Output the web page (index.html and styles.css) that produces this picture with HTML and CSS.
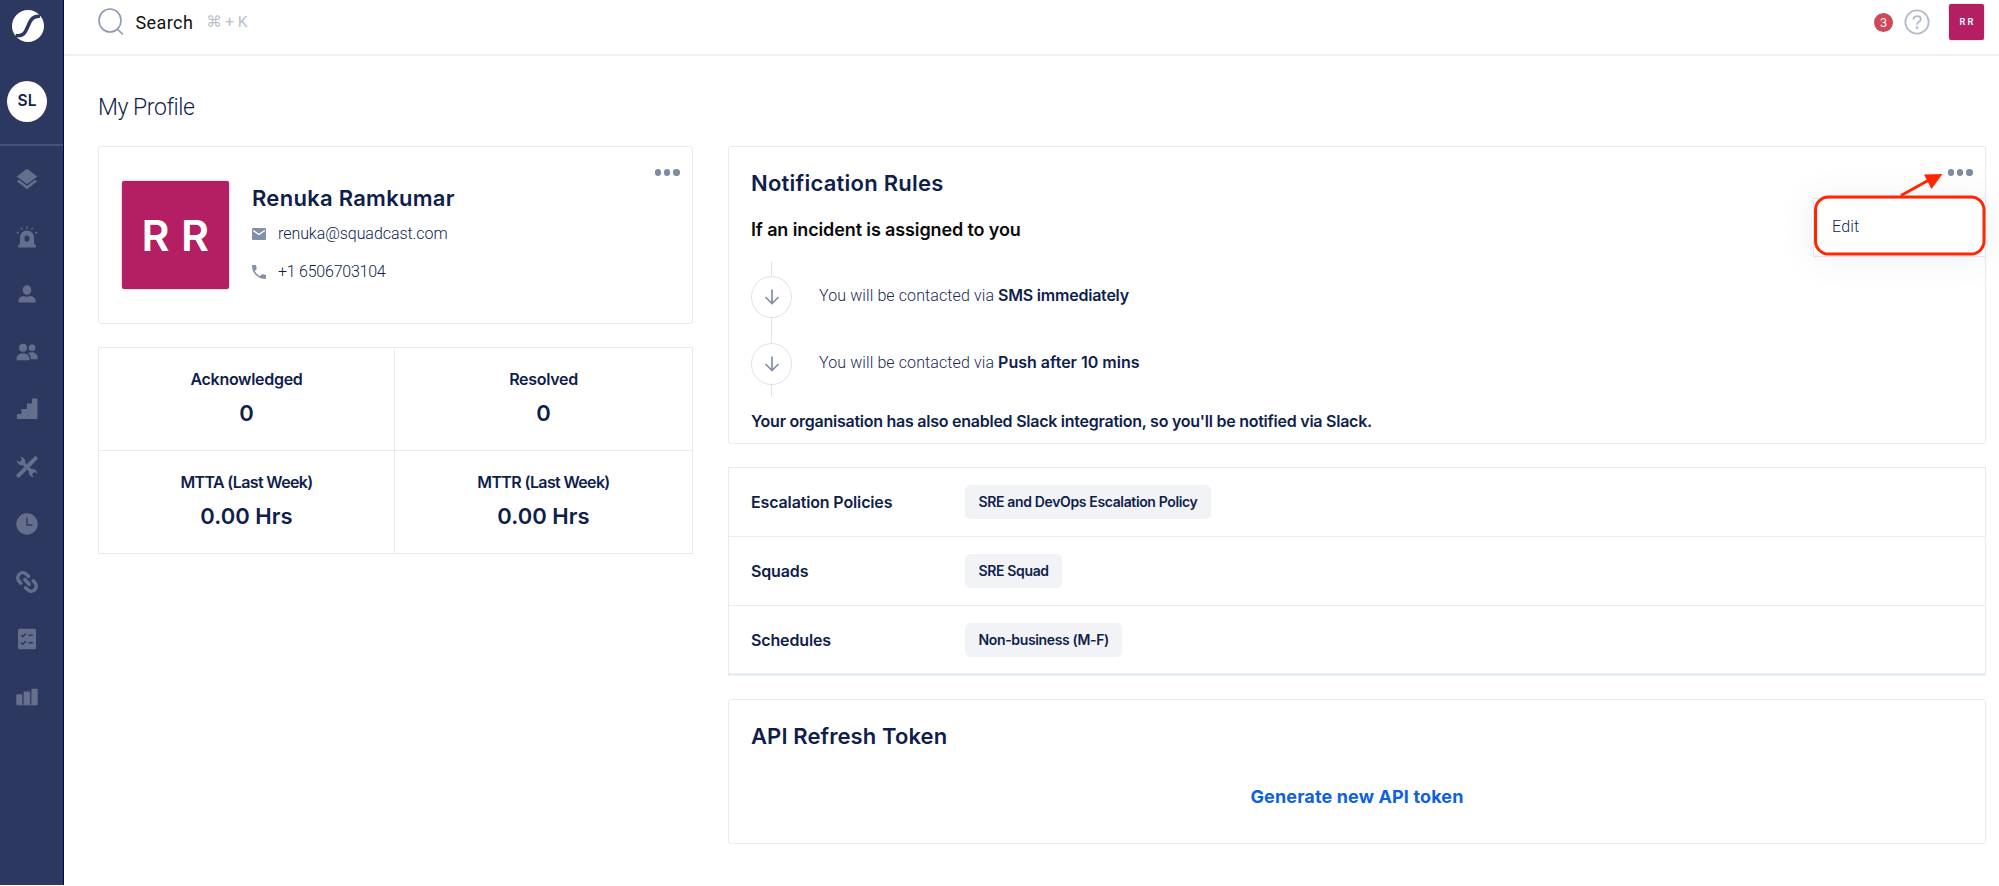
FILE: index.html
```html
<!DOCTYPE html>
<html lang="en">
<head>
<meta charset="utf-8">
<title>My Profile</title>
<link rel="stylesheet" href="styles.css">
</head>
<body>
<div class="app">
  <aside class="sidebar">
    <svg class="logo" viewBox="0 0 34 34">
      <circle cx="17" cy="17" r="16" fill="#fff"/>
      <path d="M4.500 26.500C13.500 28 14.500 22.500 17.500 16C20 10 22.500 6.800 29 7.300" fill="none" stroke="#2c3860" stroke-width="3.600"/>
    </svg>
    <div class="org">SL</div>
    <nav class="nav">
      <a class="nav-item"><svg viewBox="0 0 22 22"><path d="M11 .8 21.300 8.500 11 16.200.7 8.500z"/><path d="M.8 13.200 2.800 11.700 11 17.800l8.200-6.100 2 1.500L11 21.200z"/></svg></a>
      <a class="nav-item"><svg viewBox="0 0 22 22"><path fill-rule="evenodd" d="M4 18V11.500a7 7 0 0 1 14 0V18l1.800 1v2.500H2.200V19zM11 9.500c-1.700 0-2.500 1.200-2.500 3s.8 3.200 2.500 3.200 2.500-1.400 2.500-3.200-.8-3-2.500-3z"/><path d="M11 .3v2.400M5.200 1.800 6.500 3.700M16.800 1.800 15.500 3.700M.6 6l2.200 1.100M21.400 6l-2.200 1.100" fill="none" stroke="#656f8c" stroke-width="1.300"/></svg></a>
      <a class="nav-item"><svg viewBox="0 0 22 22"><ellipse cx="11" cy="7" rx="4.300" ry="4.800"/><path d="M2.500 19.500v-1.700c0-3 2.500-4.600 5.500-4.800 1.800 1 4.200 1 6 0 3 .2 5.500 1.800 5.500 4.800v1.700z"/></svg></a>
      <a class="nav-item"><svg viewBox="0 0 22 22"><circle cx="7" cy="6.800" r="4"/><circle cx="16" cy="6.800" r="3.300"/><path d="M.6 19.200v-1.500c0-3.200 2.600-5.200 6.400-5.200s6.500 2 6.500 5.200v1.500z"/><path d="M14.800 18.300c.2-3-.9-5-2.900-6.300 4.700-1.800 9.700.3 9.700 4.600v1.700z"/></svg></a>
      <a class="nav-item"><svg viewBox="0 0 22 22"><path d="M1 21v-5h4.500v-5H11V5.500h5V.5h5.500V21z"/></svg></a>
      <a class="nav-item"><svg viewBox="0 0 22 22"><path d="M2.400 19.600 8.600 13.400M13 9 19.500 2.400" fill="none" stroke="#656f8c" stroke-width="4" stroke-linecap="round"/><path d="M5.500 5.500 16.500 16.500" fill="none" stroke="#656f8c" stroke-width="3.200"/><path d="M4.300.7A5.400 5.400 0 0 1 8.700 8.700 5.400 5.400 0 0 1 .7 4.300L3.600 6 6 3.600zM17.700 21.300a5.400 5.400 0 0 1-4.400-8 5.400 5.400 0 0 1 8 4.400L18.400 16 16 18.400z"/></svg></a>
      <a class="nav-item"><svg viewBox="0 0 22 22"><circle cx="11" cy="11" r="10.700"/><path d="M11 4.500V12h5.500" fill="none" stroke="#2c3860" stroke-width="1.300"/></svg></a>
      <a class="nav-item"><svg viewBox="0 0 22 22"><g fill="none" stroke="#656f8c" stroke-width="3.400" stroke-linecap="round"><path d="M4.800 12.300 3.300 10.500A5 5 0 0 1 10.300 3.200L12.500 5.300"/><path d="M8.800 8.500 13.300 13.500"/><path d="M17.200 9.700 18.700 11.500A5 5 0 0 1 11.700 18.800L9.500 16.700"/></g></svg></a>
      <a class="nav-item"><svg viewBox="0 0 22 22"><rect x="2" y=".8" width="18" height="20.400" rx="1.500"/><path d="M5 7l1.800 1.800L10 5.500M5 14.500l1.800 1.800L10 13M12.500 7.300H17M12.500 14.800H17" fill="none" stroke="#2c3860" stroke-width="1.400"/></svg></a>
      <a class="nav-item"><svg viewBox="0 0 22 22"><path d="M.3 9.300q0-1 1-1h4q1 0 1 1v9.200h1.300V6.500q0-1 1-1h4.600q1 0 1 1v12h1.200V3.800q0-1 1-1h4.300q1 0 1 1v14.400q0 1-1 1H1.300q-1 0-1-1z"/></svg></a>
    </nav>
  </aside>

  <div class="main">
    <header class="topbar">
      <svg class="search-icon" viewBox="0 0 26 27" fill="none" stroke="#8f9bb3" stroke-width="1.600"><ellipse cx="12" cy="12.500" rx="11" ry="11.500"/><path d="M19 21 25 26.300"/></svg>
      <span class="search-label">Search</span>
      <span class="shortcut">⌘ + K</span>
      <div class="topbar-right">
        <span class="count">3</span>
        <svg class="help" viewBox="0 0 26 26" fill="none" stroke="#b3bac9" stroke-width="1.900"><circle cx="13" cy="13" r="11.600"/><path d="M9.300 10.600C9.300 5.800 16.800 6.200 16.800 10.300 16.800 13 13 12.700 13 15.800"/><circle cx="13" cy="18.800" r=".5"/></svg>
        <span class="user">R R</span>
      </div>
    </header>

    <main class="content">
      <h1 class="page-title">My Profile</h1>
      <div class="columns">
        <div class="col-left">
          <section class="card profile">
            <div class="avatar">R R</div>
            <div class="details">
              <div class="name">Renuka Ramkumar</div>
              <div class="contact email"><svg viewBox="0 0 14 12"><rect width="14" height="12" rx="1" fill="#8490a8"/><path d="M1.200 2.500 7 6.500l5.800-4" fill="none" stroke="#fff" stroke-width="1.400"/></svg>renuka@squadcast.com</div>
              <div class="contact phone"><svg viewBox="3 3 18 18"><path fill="#8490a8" d="M6.600 10.800c1.400 2.800 3.800 5.100 6.600 6.600l2.200-2.200c.3-.3.700-.4 1-.2 1.100.4 2.300.6 3.600.6.600 0 1 .4 1 1V20c0 .6-.4 1-1 1C10.600 21 3 13.400 3 4c0-.6.400-1 1-1h3.500c.6 0 1 .4 1 1 0 1.300.2 2.500.6 3.600.1.300 0 .7-.2 1z"/></svg>+1 6506703104</div>
            </div>
            <div class="more"><i></i><i></i><i></i></div>
          </section>
          <section class="stats">
            <div class="stat"><div class="stat-label">Acknowledged</div><div class="stat-value">0</div></div>
            <div class="stat"><div class="stat-label">Resolved</div><div class="stat-value">0</div></div>
            <div class="stat"><div class="stat-label tight">MTTA (Last Week)</div><div class="stat-value">0.00 Hrs</div></div>
            <div class="stat"><div class="stat-label tight">MTTR (Last Week)</div><div class="stat-value">0.00 Hrs</div></div>
          </section>
        </div>

        <div class="col-right">
          <section class="card rules">
            <h2 class="card-title">Notification Rules</h2>
            <div class="condition">If an incident is assigned to you</div>
            <div class="step">
              <div class="track"><div class="node"><svg viewBox="0 0 16 18"><path d="M8 1.500v14M1.500 9 8 15.500 14.500 9"/></svg></div></div>
              <div class="step-text">You will be contacted via <b>SMS immediately</b></div>
            </div>
            <div class="step">
              <div class="track"><div class="node"><svg viewBox="0 0 16 18"><path d="M8 1.500v14M1.500 9 8 15.500 14.500 9"/></svg></div></div>
              <div class="step-text">You will be contacted via <b class="push">Push after 10 mins</b></div>
            </div>
            <div class="note">Your organisation has also enabled Slack integration, so you'll be notified via Slack.</div>
            <div class="more"><i></i><i></i><i></i></div>
            <div class="menu"><div class="menu-item">Edit</div></div>
            <svg class="callout" viewBox="0 0 176 90" fill="none" stroke="#ff2600"><rect x="2.500" y="27" width="168.500" height="57" rx="13" stroke-width="3"/><path d="M88 25.500 116 10" stroke-width="3"/><path d="M129.500 4 111 4.500 118.500 19z" fill="#ff2600" stroke="none"/></svg>
          </section>

          <section class="memberships">
            <div class="row"><div class="row-label">Escalation Policies</div><span class="chip">SRE and DevOps Escalation Policy</span></div>
            <div class="row"><div class="row-label">Squads</div><span class="chip">SRE Squad</span></div>
            <div class="row"><div class="row-label">Schedules</div><span class="chip">Non-business (M-F)</span></div>
          </section>

          <section class="card token">
            <h2 class="card-title api">API Refresh Token</h2>
            <a class="generate">Generate new API token</a>
          </section>
        </div>
      </div>
    </main>
  </div>
</div>
</body>
</html>
```
FILE: styles.css
```css
* { box-sizing: border-box; }
body {
  margin: 0;
  background: #fff;
  color: #0f1e4b;
  font-family: Inter, Roboto, sans-serif;
  font-size: 16px;
  line-height: 24px;
}
h1, h2 { margin: 0; }
svg { display: block; flex: none; }

.app { display: flex; height: 886px; overflow: hidden; }

/* Sidebar */
.sidebar {
  width: 64px;
  height: 885px;
  flex: none;
  background: #2c3860;
  border-right: 1px solid #04064a;
}
.logo { width: 34px; height: 34px; margin: 8.500px 0 0 11px; }
.org {
  width: 40px;
  height: 41px;
  margin: 38.500px 0 0 7px;
  border-radius: 50%;
  background: #fff;
  font-size: 15.500px;
  font-weight: 600;
  line-height: 40px;
  text-align: center;
}
.nav {
  display: flex;
  flex-direction: column;
  gap: 35.550px;
  margin-top: 22px;
  padding: 22px 0 0 16px;
  border-top: 2px solid #47527a;
}
.nav-item { height: 22px; }
.nav-item svg { width: 22px; height: 22px; fill: #656f8c; }

/* Top bar */
.main { flex: 1; min-width: 0; }
.topbar {
  display: flex;
  align-items: center;
  height: 56px;
  padding: 0 15px 11px 34px;
  border-bottom: 2px solid #edf1f7;
}
.search-icon { width: 26px; height: 27px; }
.search-label {
  margin: 2px 0 0 11.500px;
  color: #111;
  font-family: Roboto, sans-serif;
  font-size: 18px;
  letter-spacing: .4px;
}
.shortcut {
  margin: 1px 0 0 13px;
  color: #b9bfcc;
  font-family: Roboto, "DejaVu Sans", sans-serif;
  font-size: 15.500px;
  letter-spacing: -.1px;
}
.topbar-right { display: flex; align-items: center; margin-left: auto; }
.count {
  width: 19px;
  height: 19px;
  margin-top: 1px;
  border-radius: 50%;
  background: #cf4858;
  color: #fff;
  font-size: 12px;
  line-height: 19px;
  text-align: center;
}
.help { width: 26px; height: 26px; margin: 1px 0 0 11px; }
.user {
  width: 35px;
  height: 36px;
  margin-left: 19px;
  border-radius: 2px;
  background: #b41f63;
  box-shadow: 0 0 2px rgba(0, 0, 0, .3);
  color: #fff;
  font-size: 9px;
  font-weight: 600;
  line-height: 35px;
  text-align: center;
}

/* Page */
.content { padding: 37px 13px 0 34px; }
.page-title {
  margin-bottom: 23px;
  font-family: Roboto, sans-serif;
  font-size: 23px;
  font-weight: 300;
  line-height: 30px;
  letter-spacing: -.44px;
}
.columns { display: flex; gap: 35px; }
.col-left { width: 595px; flex: none; }
.col-right { flex: 1; min-width: 0; }
.card { position: relative; border: 1px solid #e5eaf4; border-radius: 3px; }

.more { position: absolute; top: 22px; right: 12.500px; display: flex; gap: 2.700px; }
.more i { width: 6.500px; height: 6.500px; border-radius: 50%; background: #7f8ba3; }

/* Profile card */
.profile { display: flex; height: 178px; padding: 34px 0 0 23px; }
.avatar {
  width: 107px;
  height: 108px;
  border-radius: 2px;
  background: #b41f63;
  box-shadow: 0 0 3px rgba(0, 0, 0, .3);
  color: #fff;
  font-size: 43px;
  font-weight: 600;
  line-height: 108px;
  letter-spacing: .3px;
  text-align: center;
}
.details { padding: 2px 0 0 23px; }
.name { font-size: 22px; font-weight: 600; line-height: 30px; letter-spacing: .28px; }
.contact {
  display: flex;
  align-items: center;
  gap: 12px;
  font-family: Roboto, sans-serif;
  font-weight: 300;
}
.contact svg { width: 14px; height: 12px; }
.email { margin-top: 9px; letter-spacing: -.06px; }
.phone { margin-top: 14px; letter-spacing: -.24px; }
.phone svg { height: 14px; }

/* Stats */
.stats {
  display: grid;
  grid-template-columns: 296px 298px;
  grid-template-rows: 103px 103px;
  width: 595px;
  margin-top: 23px;
  border-top: 1px solid #e5eaf4;
  border-left: 1px solid #e5eaf4;
}
.stat {
  padding-top: 19px;
  border-right: 1px solid #e5eaf4;
  border-bottom: 1px solid #e5eaf4;
  text-align: center;
}
.stat-label { font-weight: 600; letter-spacing: -.3px; }
.stat-label.tight { letter-spacing: -.65px; }
.stat-value { margin-top: 7px; font-size: 22px; font-weight: 600; line-height: 30px; letter-spacing: .05px; }

/* Notification rules */
.rules { height: 298px; padding: 21px 0 0 22px; }
.card-title { font-size: 22px; font-weight: 600; line-height: 30px; letter-spacing: .23px; }
.card-title.api { letter-spacing: .1px; }
.condition { margin: 20px 0; color: #0a0a0a; font-size: 18px; font-weight: 600; letter-spacing: -.12px; }
.step { display: flex; align-items: center; gap: 27px; height: 67.500px; }
.track {
  width: 41px;
  height: 100%;
  padding-top: 13.500px;
  background: linear-gradient(#dde1ea, #dde1ea) 20px 0 / 1px 100% no-repeat;
}
.node {
  display: flex;
  align-items: center;
  justify-content: center;
  width: 41px;
  height: 42px;
  border: 1.500px solid #dfe2ea;
  border-radius: 50%;
  background: #fff;
}
.node svg { width: 16px; height: 18px; fill: none; stroke: #8490a8; stroke-width: 1.700; }
.step-text { margin-top: -1px; font-family: Roboto, sans-serif; font-weight: 300; color: #1c2a55; letter-spacing: .1px; }
.step-text b { font-family: Inter, sans-serif; font-weight: 600; color: #0f1e4b; letter-spacing: -.22px; }
.step-text .push { letter-spacing: 0; }
.note { margin-top: 12px; font-weight: 600; letter-spacing: -.25px; }

.menu {
  position: absolute;
  top: 51px;
  right: -1px;
  width: 173px;
  height: 59px;
  padding: 16px 0 0 18px;
  border: 1px solid #dfe4ee;
  background: #fff;
  box-shadow: 0 0 32px rgba(60, 80, 120, .1);
}
.menu-item { font-family: Roboto, sans-serif; font-weight: 300; letter-spacing: .2px; }
.callout { position: absolute; top: 22.500px; right: -4px; width: 176px; height: 90px; }

/* Policies, squads, schedules */
.memberships {
  margin-top: 23px;
  border: 1px solid #e5eaf4;
  border-bottom: 3px solid #e8ecf5;
}
.row { display: flex; align-items: center; height: 69px; padding-left: 22px; border-bottom: 1.500px solid #e8ecf6; }
.row:last-child { height: 67px; border-bottom: 0; }
.row-label { width: 214px; font-weight: 600; letter-spacing: -.14px; }
.chip {
  height: 34px;
  padding: 0 13.500px;
  border-radius: 5px;
  background: #f2f3f6;
  font-size: 14px;
  font-weight: 600;
  line-height: 33px;
  letter-spacing: -.36px;
}

/* API token */
.token { height: 145px; margin-top: 22.500px; padding: 21px 0 0 22px; }
.generate {
  display: block;
  margin: 34px 0 0 -22px;
  color: #0f61dd;
  font-size: 18px;
  font-weight: 700;
  letter-spacing: .13px;
  text-align: center;
}
```
